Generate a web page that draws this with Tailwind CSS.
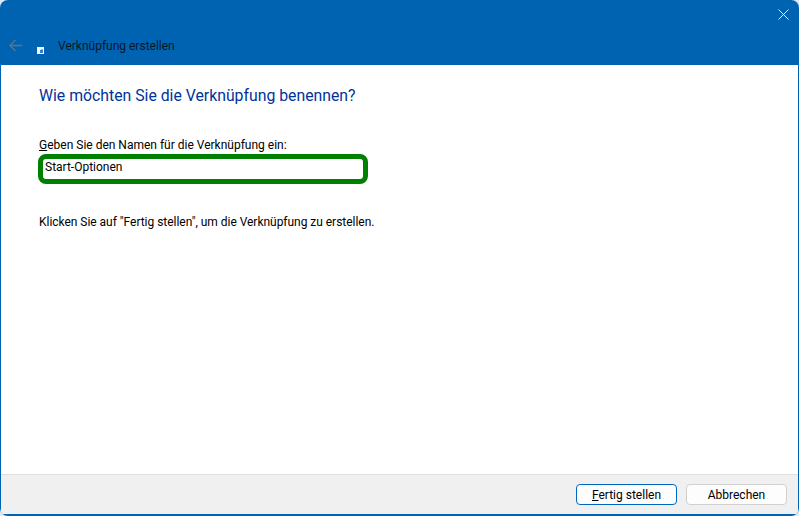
<!DOCTYPE html>
<html lang="de">
<head>
  <meta charset="UTF-8">
  <title>Verknüpfung erstellen</title>
  <script src="https://cdn.jsdelivr.net/npm/@tailwindcss/browser@4"></script>
</head>
<body class="w-[799px] h-[516px] overflow-hidden bg-[#dfe7f5] font-['Roboto','Open_Sans',sans-serif] text-[12px] text-black">
  <div class="h-[516px] flex flex-col bg-[#0063b1] rounded-[8px] overflow-hidden px-px pb-[2px]">
    <!-- Titelleiste -->
    <header class="relative h-[65px] shrink-0">
      <div class="absolute left-[8px] top-[39px]">
        <svg width="14" height="13" viewBox="0 0 14 13" fill="none" stroke="#5f7386" stroke-width="1.3"><path d="M13 6.5H1.5M6.5 1 1 6.5 6.5 12"/></svg>
      </div>
      <div class="absolute left-[36px] top-[47px]">
        <svg width="7" height="7" viewBox="0 0 7 7"><rect width="7" height="7" fill="#f4f8fc"/><path d="M3 3h3v3H3z" fill="#2a7fd6"/><path d="M4 2h2v1H4z" fill="#7fb4ea"/></svg>
      </div>
      <div class="absolute left-[57px] top-[37px] text-[#07182a] leading-[18px]">Verknüpfung erstellen</div>
      <div class="absolute left-[777px] top-[9px]">
        <svg width="11" height="11" viewBox="0 0 11 11" fill="none" stroke="#e6eef7" stroke-width="1"><path d="M.5.5l10 10M10.5.5l-10 10"/></svg>
      </div>
    </header>

    <!-- Inhalt -->
    <main class="flex-1 bg-white pl-[38px] pr-[430px] flex flex-col">
      <h1 class="mt-[20px] text-[15.8px] leading-[21px] text-[#003399] whitespace-nowrap">Wie möchten Sie die Verknüpfung benennen?</h1>
      <label class="mt-[30px] leading-[18px] whitespace-nowrap"><span class="underline">G</span>eben Sie den Namen für die Verknüpfung ein:</label>
      <div class="-ml-px w-[330px] h-[30px] shrink-0 border-[5px] border-[#008000] rounded-[8px] pl-[2px] leading-[15px] flex items-start pt-px">Start-Optionen</div>
      <p class="mt-[29px] leading-[18px] whitespace-nowrap tracking-[-0.03px]">Klicken Sie auf "Fertig stellen", um die Verknüpfung zu erstellen.</p>
    </main>

    <!-- Schaltflächen -->
    <footer class="h-[40px] shrink-0 bg-[#f0f0f0] border-t border-[#dfdfdf] flex items-start justify-end gap-[9px] pt-[9px] pr-[11px]">
      <button class="w-[101px] h-[21px] bg-[#fdfdfd] border border-[#0067c0] rounded-[4px] leading-[18px]"><span class="underline">F</span>ertig stellen</button>
      <button class="w-[101px] h-[21px] bg-[#fdfdfd] border border-[#d0d0d0] rounded-[4px] leading-[18px]">Abbrechen</button>
    </footer>
  </div>
</body>
</html>
